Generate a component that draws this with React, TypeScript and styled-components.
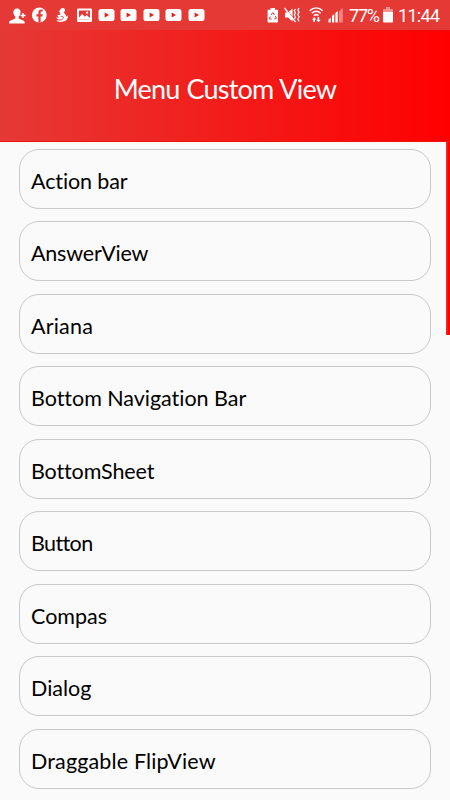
import React from "react";
import styled, { createGlobalStyle } from "styled-components";

const Global = createGlobalStyle`
  * { box-sizing: border-box; }
  body { margin: 0; background: #fafafa; overflow: hidden; }
`;

const Screen = styled.div`
  width: 450px;
  height: 800px;
  overflow: hidden;
  display: flex;
  flex-direction: column;
  background: #fafafa;
  font-family: Lato, "Open Sans", sans-serif;
  font-variant-ligatures: none;
`;

const StatusBar = styled.div`
  height: 30px;
  flex: none;
  display: flex;
  justify-content: space-between;
  background: #e53935;
  color: #fff;
  svg { display: block; flex: none; }
`;

const SystemArea = styled.div`
  display: flex;
`;

const Clock = styled.div`
  display: flex;
  width: 106px;
  align-items: center;
  font: 400 18px/30px Roboto, sans-serif;
  padding-left: 5px;
  white-space: nowrap;
`;

const Percent = styled.span`
  width: 34px;
  flex: none;
  letter-spacing: -1.2px;
  padding-top: 1px;
`;

const Time = styled.span`
  margin-left: 5px;
  letter-spacing: -0.7px;
  padding-top: 1px;
`;

const Header = styled.header`
  height: 112px;
  flex: none;
  display: flex;
  align-items: center;
  justify-content: center;
  background: linear-gradient(90deg, #e53935, #ff0000);
  border-bottom: 1px solid #f01410;
`;

const Title = styled.h1`
  margin: 0;
  padding-top: 7px;
  color: #fff;
  font-size: 27px;
  font-weight: 400;
  line-height: 32px;
  letter-spacing: -0.8px;
  word-spacing: 0.8px;
  white-space: nowrap;
`;

const Content = styled.main`
  flex: 1;
  min-height: 0;
  display: flex;
  justify-content: space-between;
`;

const List = styled.ul`
  list-style: none;
  margin: 0;
  padding: 6.9px 0 0 19px;
  width: 431px;
  display: flex;
  flex-direction: column;
  gap: 12.5px;
`;

const Row = styled.li<{ $tracking: number }>`
  height: 60px;
  flex: none;
  display: flex;
  align-items: center;
  border: 1px solid #c8c8c8;
  border-radius: 20px;
  padding: 4.2px 0 0 11px;
  color: #000;
  font-size: 21.5px;
  line-height: 28px;
  letter-spacing: ${(p) => p.$tracking}px;
  white-space: nowrap;
`;

const Scrollbar = styled.div`
  width: 4px;
  height: 193px;
  background: linear-gradient(90deg, #e53935, #ff0000 60%);
`;

const items: [string, number][] = [
  ["Action bar", -0.12],
  ["AnswerView", -0.2],
  ["Ariana", 0.2],
  ["Bottom Navigation Bar", -0.03],
  ["BottomSheet", -0.12],
  ["Button", -0.6],
  ["Compas", 0],
  ["Dialog", 0],
  ["Draggable FlipView", 0.15],
];

const videos = [99, 121, 144, 166, 189];

const Notifications = () => (
  <svg width="210" height="30" fill="#fff">
    <path d="M17 8.5c2.5 0 3.800 1.800 3.500 4.300-.2 2-1 3.100-1.800 3.900v1.700l5 2.400c.8.4 1 1.200 1 2.700H9c0-1.500.4-2.300 1.200-2.700l5.100-2.400v-1.700c-1-.8-1.700-2-1.900-3.900-.2-2.500 1.100-4.300 3.600-4.300z" />
    <path d="M20.500 15.500h5M23 13v5" stroke="#fff" strokeWidth="1.500" />
    <circle cx="39.300" cy="15" r="7.400" />
    <path d="M38.400 22.500v-6h-2v-2.300h2v-1.700c0-2 1.200-3 3.200-2.900h1.100v2h-1c-.8 0-1.100.4-1.100 1.100v1.500h2.100l-.3 2.300h-1.800v6z" fill="#e53935" />
    <path d="M62.500 8c1.900 0 2.700 1 2.500 2.500-.1.800-.7 1.500-1.500 2.300 1.600.8 2.600 2.100 2.600 3.900l1.800-1.500c.1 2.600-.8 4.900-2.900 5.900-2.800 1.300-6.800.9-9-.7 1.400.1 2.700-.1 3.700-.7-1.800-.1-2.900-1-3.500-2.400 1.200.4 2.100.3 3 0-1.200-.6-1.700-1.500-1.600-2.900.8.600 1.700.7 2.700.3-.6-.9-.7-1.900-.5-2.900l-1.400-.5 1.600-.9c.3-1.500 1.100-2.400 2.500-2.400z" />
    <path d="M60.800 16.400c1.500-.3 2.600.3 2.900 1.800M58.800 20c2 .2 3.300-.4 4.200-1.500" fill="none" stroke="#e53935" strokeWidth="1" />
    <rect x="77" y="8.500" width="15" height="13.500" rx="1.200" />
    <path d="M79 10.500h11v9H79z" fill="#e53935" />
    <path d="M79 19.500v-2l3.200-3.500 2.600 2.700 1.800-1.600 3.400 3v1.400z" />
    <circle cx="87.200" cy="12.700" r="1.100" />
    {videos.map((x) => (
      <g key={x}>
        <rect x={x - 0.5} y="9" width="16" height="12" rx="2.600" />
        <path d={`M${x + 5.6} 12.500v5l4.400-2.500z`} fill="#e5201c" />
      </g>
    ))}
  </svg>
);

const SystemIcons = () => (
  <svg width="78" height="30" viewBox="266 0 78 30" fill="#fff">
    <path d="M270.500 8h4.500v1.700h2c.6 0 1 .4 1 1v10.800c0 .6-.4 1-1 1h-8.400c-.6 0-1-.4-1-1V10.700c0-.6.4-1 1-1h1.900z" />
    <path d="M271.200 15l1.600-2.500 1.600 2.500M275.400 16l.9 2.300-2 .7M271.700 19h-2.200l.7-2.700" fill="none" stroke="#e53935" strokeWidth="1" />
    <path d="M285 12.500h3l4.500-4v13l-4.500-4h-3z" />
    <path d="M285.300 7.800l11 14" stroke="#e53935" strokeWidth="1" />
    <path d="M284.500 8l11 14" stroke="#fff" strokeWidth="1.300" />
    <path d="M295.500 9l-1.300 1.800 1.300 2-1.300 2.200 1.300 2-1 2M299 8l-1.200 2 1.300 2.100-1.300 2.400 1.300 2.300-1.300 2.200 1.200 2.500" fill="none" stroke="#fff" strokeWidth="1.200" />
    <path d="M309.700 10.700c4-3.600 9-3.600 13 0M311.700 13.200c2.700-2.300 6.300-2.300 9 0M313.800 15.500c1.500-1.100 3.300-1.100 4.800 0" fill="none" stroke="#fff" strokeWidth="1.500" />
    <path d="M312 19.500l2.100-2.500 2.200 2.500h-1.400V22h-1.600v-2.500zM316.200 19.700h1.400V17h1.600v2.700h1.400l-2.200 2.500z" />
    <path d="M328.500 22.500v-3l2.300-2v5zM332 22.500v-6.500l2.200-2v8.500zM335.400 22.500v-9.600l2.300-2v11.600z" />
    <path d="M339 22.500V11.300l3.800-3.500v14.700z" opacity=".38" />
  </svg>
);

const Battery = () => (
  <svg width="10" height="16" viewBox="0 0 10 16">
    <path d="M3 0h4v2h2q1 0 1 1v3H0V3q0-1 1-1h2z" fill="#fff" opacity=".45" />
    <path d="M0 5h10v9.500q0 1-1 1H1q-1 0-1-1z" fill="#fff" />
  </svg>
);

export default function App() {
  return (
    <Screen>
      <Global />
      <StatusBar>
        <Notifications />
        <SystemArea>
          <SystemIcons />
          <Clock>
            <Percent>77%</Percent>
            <Battery />
            <Time>11:44</Time>
          </Clock>
        </SystemArea>
      </StatusBar>
      <Header>
        <Title>Menu Custom View</Title>
      </Header>
      <Content>
        <List>
          {items.map(([label, tracking]) => (
            <Row key={label} $tracking={tracking}>{label}</Row>
          ))}
        </List>
        <Scrollbar />
      </Content>
    </Screen>
  );
}
